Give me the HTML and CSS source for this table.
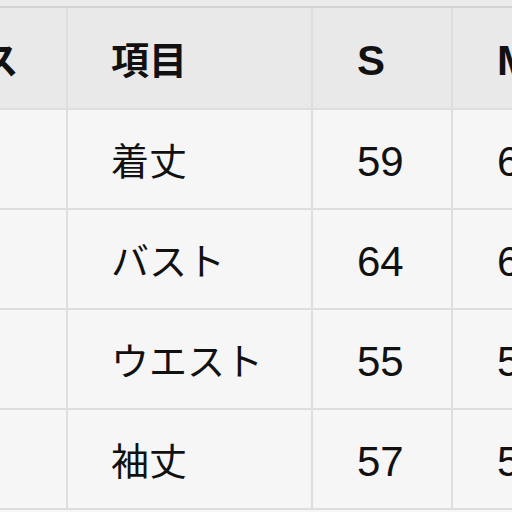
FILE: index.html
```html
<!DOCTYPE html>
<html lang="ja">
<head>
<meta charset="utf-8">
<link rel="stylesheet" href="styles.css">
</head>
<body>
<div class="top"></div>
<table class="size-table">
  <colgroup>
    <col class="c1"><col class="c2"><col class="c3"><col class="c4">
  </colgroup>
  <thead>
    <tr><th class="lead">レディース</th><th>項目</th><th class="num">S</th><th class="num">M</th></tr>
  </thead>
  <tbody>
    <tr><td></td><td>着丈</td><td class="num">59</td><td class="num">61</td></tr>
    <tr><td></td><td>バスト</td><td class="num">64</td><td class="num">66</td></tr>
    <tr><td></td><td>ウエスト</td><td class="num">55</td><td class="num">57</td></tr>
    <tr><td></td><td>袖丈</td><td class="num">57</td><td class="num">58</td></tr>
  </tbody>
</table>
</body>
</html>
```
FILE: styles.css
```css
html, body {
  margin: 0;
  padding: 0;
  background: #f6f6f6;
  overflow: hidden;
  width: 512px;
  height: 512px;
}
.top {
  height: 6px;
  background: #ececec;
  border-bottom: 2px solid #d3d3d3;
}
.size-table {
  border-collapse: collapse;
  table-layout: fixed;
  margin-left: -149px;
  width: 900px;
  font-family: "Liberation Sans", "Noto Sans CJK JP", sans-serif;
  font-size: 38px;
  color: #111;
}
.c1 { width: 215px; }
.c2 { width: 245px; }
.c3 { width: 140px; }
.c4 { width: 300px; }
.size-table th,
.size-table td {
  height: 92px;
  padding: 6px 0 0 43px;
  text-align: left;
  vertical-align: middle;
  border: 2px solid #dedede;
  white-space: nowrap;
  line-height: 1;
}
.size-table thead th {
  height: 94px;
  background: #e9e9e9;
  font-weight: bold;
  border-top: none;
}
.size-table th.lead {
  padding: 6px 0 0 0;
  text-indent: -20px;
}
.size-table .num {
  font-size: 42px;
  padding-left: 44px;
}
.size-table tbody td {
  background: #f6f6f6;
  font-weight: normal;
}
```
